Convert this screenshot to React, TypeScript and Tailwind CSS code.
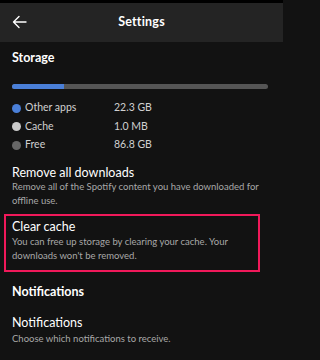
import React from 'react';

const rows = [
  { label: 'Other apps', value: '22.3 GB', dot: 'bg-[#4a7fd8]' },
  { label: 'Cache', value: '1.0 MB', dot: 'bg-[#c9c9c9]' },
  { label: 'Free', value: '86.8 GB', dot: 'bg-[#666666]' },
];

export default function App() {
  return (
    <div className="min-h-screen w-full bg-[#121212]">
      <div
        className="w-[283px] h-[360px] overflow-hidden bg-[#121212] text-white"
        style={{ fontFamily: 'Lato, "Noto Sans", sans-serif' }}
      >
        {/* Header */}
        <div className="relative flex h-[42px] items-center justify-center border-t-[3px] border-black bg-[#242424]">
          <svg
            className="absolute left-[12px] top-[12px]"
            width="15"
            height="14"
            viewBox="0 0 15 14"
            fill="none"
            stroke="white"
            strokeWidth="1.4"
            strokeLinecap="round"
            strokeLinejoin="round"
          >
            <path d="M14 7H1.5M7 1.5L1.5 7L7 12.5" />
          </svg>
          <span className="text-[12.5px] font-bold tracking-[0.2px]">Settings</span>
        </div>

        <div className="px-[12px]">
          <div className="mt-[8px] text-[12.5px] font-bold leading-[16px]">Storage</div>

          {/* Storage bar */}
          <div className="mt-[18px] flex h-[5px] w-[256px] overflow-hidden rounded-full bg-[#555555]">
            <div className="h-full w-[52px] bg-[#4a7fd8]" />
          </div>

          <div className="mt-[10px]">
            {rows.map((r) => (
              <div key={r.label} className="flex h-[18.5px] items-center text-[10.5px] text-[#d0d0d0]">
                <span className={`h-[9px] w-[9px] rounded-full ${r.dot}`} />
                <span className="ml-[4px] w-[89px]">{r.label}</span>
                <span>{r.value}</span>
              </div>
            ))}
          </div>

          <div className="mt-[10px] text-[12.5px] leading-[15px]">Remove all downloads</div>
          <div className="text-[9.5px] leading-[14px] text-[#a8a8a8]">
            Remove all of the Spotify content you have downloaded for offline use.
          </div>
        </div>

        {/* Highlighted clear cache */}
        <div className="ml-[4px] mt-[6px] w-[256px] border-2 border-[#f0195a] px-[6px] pt-[3.5px] pb-[7px]">
          <div className="text-[12.5px] leading-[15px]">Clear cache</div>
          <div className="mt-[0.5px] text-[9.5px] leading-[14px] text-[#a8a8a8]">
            You can free up storage by clearing your cache. Your downloads won't be removed.
          </div>
        </div>

        <div className="px-[12px]">
          <div className="mt-[12px] text-[12.5px] font-bold leading-[16px]">Notifications</div>
          <div className="mt-[15.5px] text-[12.5px] leading-[15px]">Notifications</div>
          <div className="mt-[1.5px] text-[9.5px] leading-[14px] text-[#a8a8a8]">
            Choose which notifications to receive.
          </div>
        </div>
      </div>
    </div>
  );
}
